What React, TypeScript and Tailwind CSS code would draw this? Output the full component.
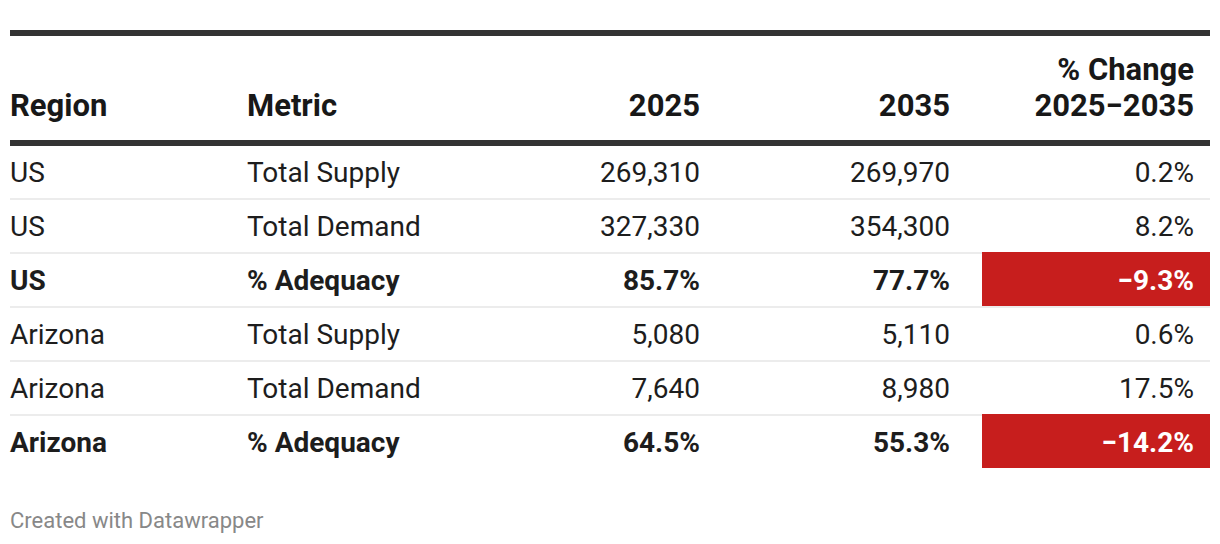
import React from 'react';

type Row = {
  region: string;
  metric: string;
  y2025: string;
  y2035: string;
  change: string;
  bold?: boolean;
  alert?: boolean;
};

const ROWS: Row[] = [
  { region: 'US', metric: 'Total Supply', y2025: '269,310', y2035: '269,970', change: '0.2%' },
  { region: 'US', metric: 'Total Demand', y2025: '327,330', y2035: '354,300', change: '8.2%' },
  { region: 'US', metric: '% Adequacy', y2025: '85.7%', y2035: '77.7%', change: '\u22129.3%', bold: true, alert: true },
  { region: 'Arizona', metric: 'Total Supply', y2025: '5,080', y2035: '5,110', change: '0.6%' },
  { region: 'Arizona', metric: 'Total Demand', y2025: '7,640', y2035: '8,980', change: '17.5%' },
  { region: 'Arizona', metric: '% Adequacy', y2025: '64.5%', y2035: '55.3%', change: '\u221214.2%', bold: true, alert: true },
];

const GRID = 'grid grid-cols-[227px_263px_232px_250px_228px]';

export default function App() {
  return (
    <div className="w-[1220px] h-[544px] bg-white pt-[30px] px-[10px] font-['Roboto',sans-serif] text-[#1d1d1d]">
      <div className="w-[1200px]">
        {/* header */}
        <div
          className={`${GRID} h-[116px] border-t-[6px] border-b-[6px] border-[#333333] font-bold text-[31px] leading-[36px] text-[#181818]`}
        >
          <div className="self-end pb-[16px]">Region</div>
          <div className="self-end pb-[16px] pl-[10px]">Metric</div>
          <div className="self-end pb-[16px] pr-[32px] text-right">2025</div>
          <div className="self-end pb-[16px] pr-[32px] text-right">2035</div>
          <div className="self-end pb-[16px] pr-[16px] text-right">
            % Change
            <br />
            2025{'\u2212'}2035
          </div>
        </div>

        {/* body */}
        {ROWS.map((r, i) => {
          const line = i === 0 ? 'h-[52px]' : 'h-[54px] border-t-2 border-[#ececec]';
          return (
            <div key={i} className={`${GRID} text-[28px] leading-[36px] ${r.bold ? 'font-bold' : ''}`}>
              <div className={`${line} flex items-center pt-[2px]`}>{r.region}</div>
              <div className={`${line} flex items-center pt-[2px] pl-[10px]`}>{r.metric}</div>
              <div className={`${line} flex items-center justify-end pt-[2px] pr-[32px]`}>{r.y2025}</div>
              <div className={`${line} flex items-center justify-end pt-[2px] pr-[32px]`}>{r.y2035}</div>
              <div
                className={
                  r.alert
                    ? 'h-[54px] border-t-2 border-[#c71e1d] bg-[#c71e1d] text-white flex items-center justify-end pt-[2px] pr-[16px]'
                    : `${line} flex items-center justify-end pt-[2px] pr-[16px]`
                }
              >
                {r.change}
              </div>
            </div>
          );
        })}
      </div>
      <div className="mt-[38px] text-[22px] leading-[30px] text-[#888888]">Created with Datawrapper</div>
    </div>
  );
}
